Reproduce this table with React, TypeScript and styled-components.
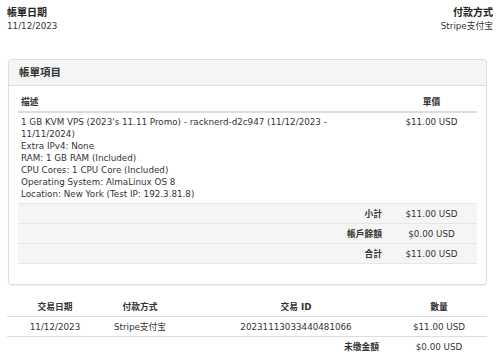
import styled, { createGlobalStyle } from "styled-components"

const GlobalStyle = createGlobalStyle`
  html, body {
    margin: 0;
    padding: 0;
    background: #fff;
  }
  body {
    font-family: "DejaVu Sans", Verdana, "Noto Sans CJK TC", sans-serif;
    font-size: 8.75px;
    line-height: 12px;
    color: #333;
  }
`

type Line = { label: string; amount: string }

const descLines = [
  "1 GB KVM VPS (2023's 11.11 Promo) - racknerd-d2c947 (11/12/2023 - 11/11/2024)",
  "Extra IPv4: None",
  "RAM: 1 GB RAM (Included)",
  "CPU Cores: 1 CPU Core (Included)",
  "Operating System: AlmaLinux OS 8",
  "Location: New York (Test IP: 192.3.81.8)",
]

const totals: Line[] = [
  { label: "小計", amount: "$11.00 USD" },
  { label: "帳戶餘額", amount: "$0.00 USD" },
  { label: "合計", amount: "$11.00 USD" },
]

const App = () => {
  return (
    <Page>
      <GlobalStyle />
      <Header>
        <InfoBlock>
          <InfoTitle>帳單日期</InfoTitle>
          <div>11/12/2023</div>
        </InfoBlock>
        <InfoBlock $right>
          <InfoTitle>付款方式</InfoTitle>
          <div>Stripe支付宝</div>
        </InfoBlock>
      </Header>

      <Panel>
        <PanelHeading>帳單項目</PanelHeading>
        <PanelBody>
          <ItemTable>
            <HeadCell>描述</HeadCell>
            <HeadCell $center>單價</HeadCell>
            <Cell $desc>
              {descLines.map((l) => (
                <div key={l}>{l}</div>
              ))}
            </Cell>
            <Cell $center>$11.00 USD</Cell>
            {totals.map((t) => (
              <TotalRow key={t.label}>
                <TotalLabel>{t.label}</TotalLabel>
                <TotalAmount>{t.amount}</TotalAmount>
              </TotalRow>
            ))}
          </ItemTable>
        </PanelBody>
      </Panel>

      <TxTable>
        <TxHead>交易日期</TxHead>
        <TxHead>付款方式</TxHead>
        <TxHead $shift>交易 ID</TxHead>
        <TxHead>數量</TxHead>
        <TxCell>11/12/2023</TxCell>
        <TxCell>Stripe支付宝</TxCell>
        <TxCell $shift>20231113033440481066</TxCell>
        <TxCell>$11.00 USD</TxCell>
        <BalanceLabel>未缴金額</BalanceLabel>
        <BalanceCell>$0.00 USD</BalanceCell>
      </TxTable>
    </Page>
  )
}

export default App

const Page = styled.div({
  padding: "6px 7px 0 7px",
})

const Header = styled.div({
  display: "flex",
  justifyContent: "space-between",
})

const InfoBlock = styled.div<{ $right?: boolean }>((p) => ({
  textAlign: p.$right ? "right" : "left",
  lineHeight: "13px",
}))

const InfoTitle = styled.div({
  fontSize: 10,
  fontWeight: "bold",
  color: "#222",
  marginBottom: 1,
})

const Panel = styled.div({
  marginTop: 26,
  marginRight: 6,
  marginLeft: 1,
  border: "1px solid #ddd",
  borderRadius: 3,
  boxShadow: "0 1px 1px rgba(0,0,0,0.05)",
})

const PanelHeading = styled.div({
  background: "#f5f5f5",
  borderBottom: "1px solid #ddd",
  borderRadius: "3px 3px 0 0",
  height: 25,
  lineHeight: "25px",
  padding: "0 10px",
  fontSize: 10.5,
  fontWeight: "bold",
  color: "#333",
})

const PanelBody = styled.div({
  padding: "6px 9px 20px 9px",
})

const ItemTable = styled.div({
  display: "grid",
  gridTemplateColumns: "1fr 91px",
})

const HeadCell = styled.div<{ $center?: boolean }>((p) => ({
  fontWeight: "bold",
  padding: "4px 3px 3px",
  height: 12,
  textAlign: p.$center ? "center" : "left",
  borderBottom: "2px solid #ddd",
}))

const Cell = styled.div<{ $center?: boolean; $desc?: boolean }>((p) => ({
  padding: p.$desc ? "3px 24px 3px 3px" : "3px 3px",
  textAlign: p.$center ? "center" : "left",
  borderBottom: "1px solid #e6e6e6",
}))

const TotalRow = styled.div({
  display: "contents",
})

const TotalLabel = styled.div({
  background: "#f5f5f5",
  borderBottom: "1px solid #e6e6e6",
  fontWeight: "bold",
  textAlign: "right",
  padding: "4px 4px",
  height: 11,
})

const TotalAmount = styled.div({
  background: "#f5f5f5",
  borderBottom: "1px solid #e6e6e6",
  textAlign: "center",
  padding: "4px 0",
  height: 11,
})

const TxTable = styled.div({
  marginTop: 12,
  marginRight: 6,
  display: "grid",
  gridTemplateColumns: "96px 74px 214px 96px",
})

const TxHead = styled.div<{ $shift?: boolean }>((p) => ({
  fontWeight: "bold",
  textAlign: "center",
  padding: p.$shift ? "4px 0 4px 24px" : "4px 0",
  height: 11,
  borderBottom: "1px solid #ddd",
}))

const TxCell = styled.div<{ $shift?: boolean }>((p) => ({
  textAlign: "center",
  padding: p.$shift ? "4px 0 4px 24px" : "4px 0",
  height: 11,
  borderBottom: "1px solid #ddd",
}))

const BalanceLabel = styled.div({
  gridColumn: "1 / span 3",
  fontWeight: "bold",
  textAlign: "right",
  padding: "4px 12px 4px 0",
  height: 11,
})

const BalanceCell = styled.div({
  textAlign: "center",
  padding: "4px 0",
  height: 11,
})
